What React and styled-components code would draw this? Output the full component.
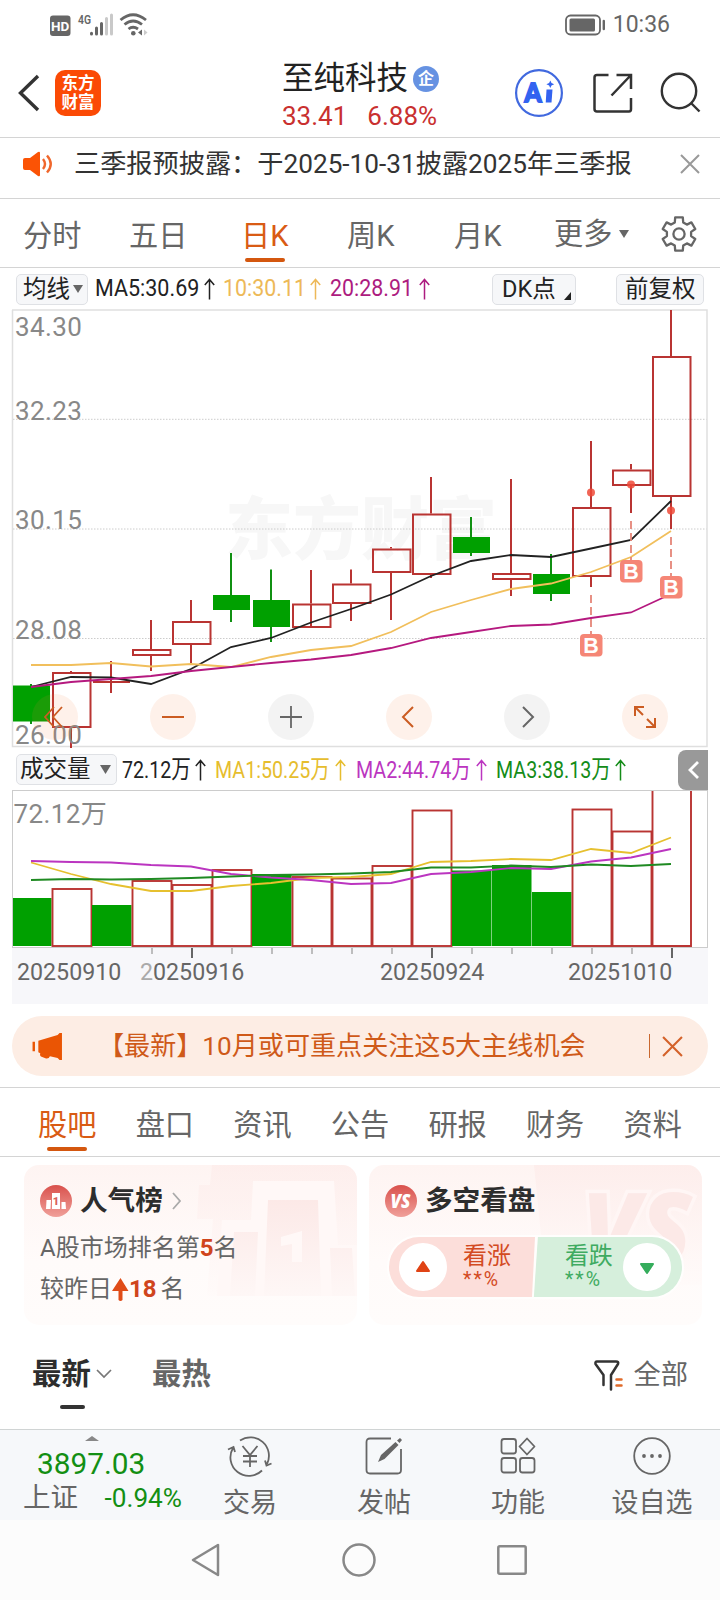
import React from 'react'
import styled, { createGlobalStyle } from 'styled-components'

const GlobalStyle = createGlobalStyle`
* { box-sizing: border-box; }
body {
    margin: 0;
    background: #fff;
    font-family: Roboto, "Noto Sans CJK SC", sans-serif;
    color: #333;
}
svg { display: block; flex: none; overflow: visible; }
`

const Page = styled.div`
width: 720px;
height: 1600px;
overflow: hidden;
display: flex;
flex-direction: column;
white-space: nowrap;
`

// -------Status bar-----------
const StatusBar = styled.div`
height: 48px;
padding: 1px 50px 0 50px;
display: flex;
align-items: center;
justify-content: space-between;
font-size: 23px;
line-height: 47px;
color: #666;
`
const StatusGroup = styled.div`
display: flex;
align-items: center;
gap: 8px;
`

// -------Header-----------
const Header = styled.header`
height: 90px;
border-bottom: 1px solid #d4d4d4;
padding: 0 20px 0 18px;
display: grid;
grid-template-columns: 264px 1fr 185px;
align-items: center;
`
const HeaderLeft = styled.div`
display: flex;
align-items: center;
gap: 16px;
`
const Logo = styled.div`
width: 46px;
height: 46px;
border-radius: 10px;
background: #fb4a05;
color: #fff;
font-size: 16.5px;
line-height: 19px;
font-weight: 700;
text-align: center;
padding-top: 4px;
`
const HeaderTitle = styled.div`
padding-top: 8px;
`
const StockName = styled.div`
display: flex;
align-items: center;
gap: 5px;
font-size: 31.5px;
line-height: 38px;
color: #222;
`
const Badge = styled.span`
width: 26px;
height: 26px;
border-radius: 50%;
background: #6692e2;
color: #fff;
font-size: 16px;
line-height: 26px;
font-weight: 700;
text-align: center;
`
const Quote = styled.div`
display: flex;
gap: 20px;
font-size: 26px;
line-height: 36px;
color: #c9302f;
`
const HeaderIcons = styled.div`
display: flex;
align-items: center;
justify-content: space-between;
`

// -------Notice-----------
const Notice = styled.div`
height: 61px;
padding: 0 20px 9px 22px;
border-bottom: 1px solid #d4d4d4;
display: flex;
align-items: center;
font-size: 26.2px;
line-height: 50px;
color: #333;
`
const NoticeText = styled.span`
flex: 1;
padding-left: 21px;
`

// -------Tabs-----------
const PeriodTabs = styled.nav`
height: 69px;
padding: 0 23px;
border-bottom: 1px solid #d4d4d4;
display: grid;
grid-template-columns: 106px 112px 106px 107px 100px 107px 36px;
justify-items: start;
`
const Tab = styled.div`
height: 66px;
display: flex;
flex-direction: column;
align-items: center;
font-size: 29.2px;
line-height: 74px;
color: ${({ $active }) => ($active ? '#d95b14' : '#666')};

&::after {
    content: "";
    width: 40px;
    height: 4px;
    flex: none;
    margin-top: -15px;
    border-radius: 2px;
    background: ${({ $active }) => ($active ? '#d4570f' : 'transparent')};
}
`
const MoreTab = styled.div`
display: flex;
align-items: center;
gap: 7px;
height: 70px;
font-size: 29.2px;
line-height: 74px;
color: #666;
`

// -------Indicator rows-----------
const IndicatorRow = styled.div`
height: ${({ $height }) => $height};
padding: 1px 12px 0 16px;
display: flex;
align-items: center;
`
const Chip = styled.div`
width: ${({ $width }) => $width};
height: 31px;
margin-right: ${({ $gap }) => $gap || '0'};
padding-left: ${({ $pad }) => $pad || '7px'};
border: 1px solid #dfe1e5;
border-radius: 5px;
background: #f6f7f9;
display: flex;
align-items: center;
gap: ${({ $inner }) => $inner || '5px'};
font-size: 23.5px;
line-height: 29px;
color: #222;
`
const Figure = styled.div`
width: ${({ $width }) => $width};
display: flex;
align-items: center;
color: ${({ $color }) => $color};
`
const FigureText = styled.span`
width: ${({ $width }) => $width};
font-size: ${({ $size }) => $size || '23px'};
line-height: 30px;

span {
    display: inline-block;
    transform: scaleX(${({ $scale }) => $scale});
    transform-origin: left;
}
`
const SideToggle = styled.div`
width: 30px;
height: 40px;
margin-left: auto;
border-radius: 8px 0 0 8px;
background: #999;
display: flex;
align-items: center;
justify-content: center;
`

// -------Charts-----------
const ChartArea = styled.div`
position: relative;
height: ${({ $height }) => $height};
`
const ChartTools = styled.div`
position: absolute;
left: 32px;
right: 52px;
bottom: 8px;
display: flex;
justify-content: space-between;
`
const ToolButton = styled.div`
width: 46px;
height: 46px;
border-radius: 50%;
background: ${({ $grey }) => ($grey ? 'rgba(170, 170, 170, .14)' : 'rgba(250, 130, 60, .11)')};
color: ${({ $grey }) => ($grey ? '#666' : '#cb5c22')};
display: flex;
align-items: center;
justify-content: center;
`

// -------Banner-----------
const Banner = styled.div`
height: 60px;
margin: 12px 12px 11px;
padding: 0 25px 0 20px;
border-radius: 30px;
background: #fdede4;
display: flex;
align-items: center;
font-size: 26.1px;
line-height: 60px;
color: #cf5a19;
`
const BannerText = styled.span`
flex: 1;
padding-left: 35px;
`
const Divider = styled.i`
width: 1.5px;
height: 24px;
margin-right: 12px;
background: #c9682f;
`

const SectionTabs = styled.nav`
height: 70px;
border-top: 1px solid #d4d4d4;
border-bottom: 1px solid #d4d4d4;
padding: 0 18.5px;
display: grid;
grid-template-columns: repeat(7, 1fr);
`

// -------Cards-----------
const Cards = styled.div`
height: 168px;
padding: 8px 18px 0 24px;
display: grid;
grid-template-columns: 333px 333px;
gap: 12px;
`
const Card = styled.section`
position: relative;
overflow: hidden;
height: 160px;
border-radius: 15px;
background: linear-gradient(#fef4f2, #fffbfa 60%, #fffcfb);
padding: 15px 0 0 16px;
`
const CardArt = styled.div`
position: absolute;
top: 0;
right: 0;
`
const CardTitle = styled.div`
position: relative;
display: flex;
align-items: center;
gap: 8px;
height: 42px;
font-size: 27.6px;
line-height: 44px;
font-weight: 700;
color: #2d2d2d;
`
const CardLine = styled.div`
position: relative;
height: 41px;
display: flex;
align-items: center;
font-size: 24px;
line-height: 41px;
padding-top: ${({ $drop }) => $drop || '11px'};
color: #666;

b {
    margin-right: ${({ $space }) => $space || '0'};
    color: #d0451d;
}
`
const Vote = styled.div`
position: relative;
width: 297px;
height: 64px;
margin: 13px 0 0 2px;
border: 2px solid #fffefd;
border-radius: 32px;
background: #fffefd;
display: flex;
overflow: hidden;
`
const VoteSide = styled.div`
width: ${({ $up }) => ($up ? '149px' : '150px')};
margin-left: ${({ $up }) => ($up ? '0' : '-4px')};
height: 60px;
padding: ${({ $up }) => ($up ? '0 0 0 10px' : '0 11px 0 32px')};
display: flex;
align-items: center;
justify-content: ${({ $up }) => ($up ? 'flex-start' : 'space-between')};
gap: ${({ $up }) => ($up ? '16px' : '0')};
color: ${({ $up }) => ($up ? '#d34a22' : '#3fab61')};
background: ${({ $up }) => ($up ? '#fcdeda' : '#d6efdc')};
clip-path: ${({ $up }) => ($up
        ? 'polygon(0 0, 146px 0, 143px 100%, 0 100%)'
        : 'polygon(5px 0, 100% 0, 100% 100%, 1px 100%)')};
`
const VoteCircle = styled.div`
width: 48px;
height: 48px;
border-radius: 50%;
background: #fff;
display: flex;
align-items: center;
justify-content: center;
`
const VoteText = styled.div`
padding-bottom: 3px;
font-size: 24px;
line-height: 28px;

small {
    display: block;
    font-size: 19.5px;
    line-height: 19px;
    letter-spacing: 2px;
}
`

// -------Post filter-----------
const PostTabs = styled.div`
height: 105px;
border-bottom: 1px solid #d0d4d4;
padding: 0 32px 4px 32px;
display: flex;
align-items: center;
`
const PostTab = styled.div`
height: 66px;
margin-right: ${({ $gap }) => $gap || '0'};
font-size: 29.4px;
line-height: 64px;
font-weight: 700;
color: ${({ $active }) => ($active ? '#2d2d2d' : '#666')};
display: flex;
flex-wrap: wrap;
align-content: flex-start;
align-items: center;
width: ${({ $width }) => $width};
gap: 0 6px;

&::after {
    content: "";
    width: 25px;
    height: 4px;
    margin: -1px 0 0 28px;
    border-radius: 2px;
    background: ${({ $active }) => ($active ? '#333' : 'transparent')};
}
`
const Filter = styled.div`
margin-left: auto;
display: flex;
align-items: center;
gap: 10px;
font-size: 27.3px;
line-height: 60px;
color: #666;
`

// -------Bottom bars-----------
const ActionBar = styled.footer`
height: 90px;
background: #f6f8fa;
display: flex;
`
const IndexQuote = styled.div`
width: 183px;
color: #138f13;
`
const IndexCaret = styled.div`
display: flex;
height: 12px;
padding: 6px 0 0 85px;
`
const IndexValue = styled.div`
padding-left: 37px;
height: 44px;
font-size: 29.8px;
line-height: 44px;
`
const IndexChange = styled.div`
display: flex;
justify-content: space-between;
padding: 1px 1px 0 23px;
font-size: 26.2px;
line-height: 22px;

span {
    font-size: 27.5px;
    color: #666;
}
`
const Action = styled.div`
width: 134px;
padding-top: 6px;
display: flex;
flex-direction: column;
align-items: center;
gap: 8px;
font-size: 27px;
line-height: 38px;
color: #666;
`
const SystemNav = styled.div`
height: 80px;
background: #fcfcfc;
padding: 0 193px 0 191px;
display: flex;
align-items: center;
justify-content: space-between;
`

// -------Data-----------
// [up, bodyTop, bodyBottom, high, low]
const candles = [
    [false, 685.5, 721.5, 684, 724],
    [true, 672, 728, 671, 748],
    [true, 681, 683, 661, 693],
    [true, 649, 656, 620, 671],
    [true, 621, 645, 600, 663],
    [false, 595, 610, 553, 622],
    [false, 600, 627, 569.5, 642],
    [true, 603.5, 628, 570, 604],
    [true, 583.5, 604, 569.5, 621],
    [true, 548.5, 573, 547, 620],
    [true, 513.5, 575, 477, 578],
    [false, 537, 553, 517, 556],
    [true, 573, 580, 479, 596],
    [false, 574, 594, 554, 601],
    [true, 507, 577, 441, 587],
    [true, 469.5, 486, 464, 513],
    [true, 356, 497, 310, 529],
]

const signals = [
    { i: 14, dot: 492.5, from: 595, box: 634 },
    { i: 15, dot: 484.5, from: 521, box: 560 },
    { i: 16, dot: 510.5, from: 537, box: 576 },
]

const averages = [
    { color: '#222', values: [687, 677, 677.5, 684, 669, 647, 638, 622.5, 609, 594.5, 576, 561, 555, 557, 548.5, 540, 501] },
    { color: '#f1bf5c', values: [665, 665, 663, 666.5, 664, 667, 657, 650, 646, 632, 612, 600, 589, 583.5, 572, 557, 531] },
    { color: '#b5197f', values: [687, 682, 679, 676, 671, 667, 663, 659.5, 655, 648, 638, 632, 626, 624.5, 618, 612.5, 594] },
]

// [up, top]
const volumes = [
    [false, 898], [true, 889], [false, 905], [true, 881], [true, 885], [true, 870],
    [false, 874], [true, 877], [true, 878.5], [true, 866], [true, 810.5], [false, 870.5],
    [false, 865], [false, 892], [true, 809.5], [true, 831.5], [true, 780],
]

const volumeAverages = [
    { color: '#e6c02f', values: [862.5, 874, 884, 891, 891, 886, 883, 878, 877, 874, 862, 861, 859, 860, 849, 853, 837.5] },
    { color: '#bb35c0', values: [861, 862, 862.5, 865, 866.5, 874, 877.5, 880, 884, 883, 874, 872, 868, 869, 861.5, 857.5, 849] },
    { color: '#1f8a22', values: [880, 879, 879.5, 879, 878, 876.5, 875, 874.5, 873.5, 872, 867.5, 867.5, 865.5, 867, 864.5, 866, 864] },
]

const priceLabels = [['34.30', 336], ['32.23', 420], ['30.15', 529], ['28.08', 638.5], ['26.00', 744]]
const dates = [['20250910', 17], ['20250916', 140], ['20250924', 380], ['20251010', 568]]
const sections = ['股吧', '盘口', '资讯', '公告', '研报', '财务', '资料']

const RED = '#b93432'
const GREEN = '#00a000'
const columnX = (i) => 31 + i * 40
const toPoints = (values) => values.map((y, i) => `${columnX(i)},${y}`).join(' ')

// -------Icons-----------
const UpArrow = () => (
    <svg width="11" height="22" viewBox="0 0 11 22" fill="none" stroke="currentColor" strokeWidth="1.5">
        <path d="M5.5 21.5V2M.8 7L5.5 1.5 10.2 7" />
    </svg>
)

const DownTriangle = ({ width = 10, height = 8 }) => (
    <svg width={width} height={height} viewBox="0 0 10 8" fill="#666">
        <path d="M0 0h10L5 8z" />
    </svg>
)

const Cross = ({ size, color, weight = 1.8 }) => (
    <svg width={size} height={size} viewBox="0 0 20 20" stroke={color} strokeWidth={weight}>
        <path d="M1 1l18 18M19 1L1 19" />
    </svg>
)

const Gear = () => {
    const spots = []
    for (let i = 0; i < 6; i++) {
        const a = i * 60 - 90;
        [[-20, 12.3], [-13, 17], [13, 17], [20, 12.3]].forEach(([offset, r]) => {
            const t = ((a + offset) * Math.PI) / 180
            spots.push(`${(18 + r * Math.cos(t)).toFixed(1)},${(18 + r * Math.sin(t)).toFixed(1)}`)
        })
    }
    return (
        <svg width="36" height="36" viewBox="0 0 36 36" fill="none" stroke="#666" strokeWidth="2.3" strokeLinejoin="round">
            <polygon points={spots.join(' ')} />
            <circle cx="18" cy="18" r="5.6" />
        </svg>
    )
}

const SignalIcons = () => (
    <svg width="98" height="24" viewBox="50 12.5 98 24">
        <rect x="50" y="15" width="20.5" height="20.5" rx="3" fill="#666" />
        <text x="60.2" y="30.5" fontSize="13.5" fontWeight="700" fill="#fff" textAnchor="middle">HD</text>
        <text x="78" y="23" fontSize="13.5" fontWeight="600" fill="#666" textLength="13" lengthAdjust="spacingAndGlyphs">4G</text>
        <g strokeWidth="3" strokeLinecap="round">
            <path d="M91.5 33.5v-.8M96.5 33.5v-6M101.5 33.5V23" stroke="#666" />
            <path d="M106.5 33.5V18M111.5 33.5V14.5" stroke="#c9c9c9" />
        </g>
        <g fill="none" stroke="#666" strokeWidth="2.8">
            <path d="M120.5 19.5q12.5-10.5 25.5 0M124.5 24q8.5-7 17.5 0M128.5 28.5q4.5-3.5 9.5 0" />
        </g>
        <circle cx="133.3" cy="32.8" r="2.3" fill="#666" />
        <path d="M142 29v6l-4-3z" fill="#666" />
        <path d="M144 29v6l3.5-3z" fill="#ccc" />
    </svg>
)

const Battery = () => (
    <svg width="40" height="22" viewBox="0 0 40 22" fill="none">
        <rect x="1" y="1.5" width="34" height="19" rx="4.5" stroke="#666" strokeWidth="1.8" />
        <rect x="4.5" y="4.5" width="25.5" height="13" rx="1.5" fill="#666" />
        <path d="M38.8 7v8" stroke="#666" strokeWidth="2.4" strokeLinecap="round" />
    </svg>
)

const AiIcon = () => (
    <svg width="48" height="48" viewBox="0 0 48 48">
        <circle cx="24" cy="24" r="22.9" fill="none" stroke="#4169df" strokeWidth="2.2" />
        <text x="9.5" y="33" fontFamily="Lato" fontSize="27" fontWeight="900" fill="#3363f0" stroke="#3363f0" strokeWidth="1.8" textLength="17" lengthAdjust="spacingAndGlyphs">A</text>
        <path d="M31.5 20.500h6l-1 13h-5.800z" fill="#3363f0" />
        <path d="M35.3 11.5l1.200 2.600 2.700 1.200-2.700 1.200-1.200 2.600-1.200-2.600-2.700-1.200 2.700-1.200z" fill="#3363f0" />
    </svg>
)

// -------JSX Elements-----------
const PriceChart = () => (
    <svg width="720" height="439" viewBox="0 309 720 439">
        <text x="225" y="554" fontFamily="Noto Sans CJK SC" fontSize="68" fontWeight="900" fill="#f7f7f7">东方财富</text>
        {[419.3, 529, 638.5].map((y) => (
            <line key={y} x1="13" x2="707" y1={y} y2={y} stroke="#ccc" strokeDasharray="1.5 1.5" />
        ))}
        <path d="M12 310H707V746.5H12.5V310" fill="none" stroke="#dfdfdf" strokeWidth="1.5" />
        {candles.map(([up, top, bottom, high, low], i) => {
            const x = columnX(i)
            const color = up ? RED : '#109012'
            return (
                <g key={i}>
                    <path d={up ? `M${x} ${high}V${top}M${x} ${bottom}V${low}` : `M${x} ${high}V${low}`} stroke={color} strokeWidth="2" />
                    {up
                        ? (bottom - top < 3
                            ? <rect x={x - 18} y={top} width="37" height="2" fill={RED} />
                            : <rect x={x - 18} y={top + 1} width="37.5" height={bottom - top - 2} fill="none" stroke={RED} strokeWidth="2" />)
                        : <rect x={x - 18} y={top} width="37" height={bottom - top} fill={GREEN} />}
                </g>
            )
        })}
        {averages.map(({ color, values }) => (
            <polyline key={color} points={toPoints(values)} fill="none" stroke={color} strokeWidth="1.8" />
        ))}
        {signals.map(({ i, dot, from, box }) => (
            <g key={i}>
                <circle cx={columnX(i)} cy={dot} r="4" fill="#ee4a38" fillOpacity=".85" />
                <line x1={columnX(i)} x2={columnX(i)} y1={from} y2={box} stroke="#e58578" strokeWidth="1.8" strokeDasharray="8 4" />
                <rect x={columnX(i) - 11} y={box} width="22.5" height="22.5" rx="4" fill="#f58676" />
                <text x={columnX(i)} y={box + 18.5} fontFamily="Liberation Sans" fontSize="21.5" fontWeight="700" fill="#fff" textAnchor="middle">B</text>
            </g>
        ))}
        {priceLabels.map(([label, y]) => (
            <text key={label} x="15" y={y} fontSize="26" letterSpacing=".4" fill="#888">{label}</text>
        ))}
    </svg>
)

const VolumeChart = () => (
    <svg width="720" height="214" viewBox="0 790 720 214">
        <rect x="12" y="948" width="696" height="56" fill="#f7f7fa" />
        <rect x="12.5" y="790.5" width="695" height="157" fill="#fff" stroke="#ccc" />
        <text x="13.5" y="822.5" fontSize="26" letterSpacing=".4" fill="#888">72.12万</text>
        {volumes.map(([up, top], i) => {
            const x = columnX(i)
            if (!up) return <rect key={i} x={i === 0 ? 13 : x - 19} y={top} width={i === 0 ? 38.5 : 39.5} height={946 - top} fill={GREEN} />
            if (top < 791) return <path key={i} d={`M${x - 18.5} 791V946H${x + 20}V791`} fill="none" stroke={RED} strokeWidth="1.9" />
            return <rect key={i} x={x - 18.5} y={top} width="39" height={946 - top} fill="none" stroke={RED} strokeWidth="1.9" />
        })}
        {volumeAverages.map(({ color, values }) => (
            <polyline key={color} points={toPoints(values)} fill="none" stroke={color} strokeWidth="1.8" />
        ))}
        {volumes.map((_, i) => {
            const major = i === 4 || i === 10 || i === 16
            return i > 2 && (
                <line key={i} x1={columnX(i) + 1} x2={columnX(i) + 1} y1="948" y2={major ? 958 : 954} stroke={major ? '#666' : '#aaa'} strokeWidth={major ? 2 : 1.5} />
            )
        })}
        {dates.map(([label, x], i) => (
            <text key={label} x={x} y="980" fontSize="23.2" fill="#666">
                {i === 1 ? <><tspan fill="#aaa">2</tspan>{label.slice(1)}</> : label}
            </text>
        ))}
    </svg>
)

const App = () => {
    return (
        <Page>
            <GlobalStyle />

            {/* Status bar */}
            <StatusBar>
                <SignalIcons />
                <StatusGroup><Battery />10:36</StatusGroup>
            </StatusBar>

            {/* Header */}
            <Header>
                <HeaderLeft>
                    <svg width="21" height="36" viewBox="0 0 21 36" fill="none" stroke="#333" strokeWidth="3.4">
                        <path d="M20 1L2.5 18 20 35" />
                    </svg>
                    <Logo>东方<br />财富</Logo>
                </HeaderLeft>
                <HeaderTitle>
                    <StockName>至纯科技<Badge>企</Badge></StockName>
                    <Quote><span>33.41</span><span>6.88%</span></Quote>
                </HeaderTitle>
                <HeaderIcons>
                    <AiIcon />
                    <svg width="40" height="40" viewBox="0 0 40 40" fill="none" stroke="#333" strokeWidth="2.5">
                        <path d="M16.5 2H5Q2.5 2 2.5 4.500V36Q2.5 38.5 5 38.5H37Q39 38.5 39 36V25M24.5 2H39V16M19.5 22.5L39 2" />
                    </svg>
                    <svg width="40" height="40" viewBox="0 0 40 40" fill="none" stroke="#333" strokeWidth="2.4">
                        <circle cx="19" cy="18" r="17.2" />
                        <path d="M31 30l8.5 8.5" />
                    </svg>
                </HeaderIcons>
            </Header>

            {/* Notice */}
            <Notice>
                <svg width="31" height="26" viewBox="0 0 31 26">
                    <path d="M1 9q0-2 2-2h5l8-6q2-1 2 1v22q0 2-2 1l-8-6H3q-2 0-2-2z" fill="#fb5305" />
                    <path d="M21 8q4 5 0 10M25 4.5q7.5 8.5 0 17" fill="none" stroke="#f0672c" strokeWidth="2.4" />
                </svg>
                <NoticeText>三季报预披露：于2025-10-31披露2025年三季报</NoticeText>
                <Cross size={20} color="#999" weight={2} />
            </Notice>

            {/* Period tabs */}
            <PeriodTabs>
                <Tab>分时</Tab>
                <Tab>五日</Tab>
                <Tab $active>日K</Tab>
                <Tab>周K</Tab>
                <Tab>月K</Tab>
                <MoreTab>更多<DownTriangle /></MoreTab>
                <MoreTab><Gear /></MoreTab>
            </PeriodTabs>

            {/* Moving averages */}
            <IndicatorRow $height="41px">
                <Chip $width="72px" $gap="7px" $pad="6px" $inner="3px">均线<DownTriangle /></Chip>
                <Figure $width="128px" $color="#222">
                    <FigureText $width="109px" $scale=".935"><span>MA5:30.69</span></FigureText><UpArrow />
                </Figure>
                <Figure $width="107px" $color="#edb958">
                    <FigureText $width="87px" $scale=".93"><span>10:30.11</span></FigureText><UpArrow />
                </Figure>
                <Figure $width="162px" $color="#ad1c80">
                    <FigureText $width="89px" $scale=".93"><span>20:28.91</span></FigureText><UpArrow />
                </Figure>
                <Chip $width="84px" $gap="40px" $pad="9px" $inner="8px">
                    DK点
                    <svg width="7" height="22" viewBox="0 0 7 22"><path d="M7 14v8H0z" fill="#222" /></svg>
                </Chip>
                <Chip $width="88px" $pad="8px">前复权</Chip>
            </IndicatorRow>

            {/* Price chart */}
            <ChartArea $height="439px">
                <PriceChart />
                <ChartTools>
                    <ToolButton>
                        <svg width="19" height="20" viewBox="0 0 19 20" fill="none" stroke="currentColor" strokeWidth="1.8"><path d="M8 0L-1 10l9 10M16 0L7 10l9 10" /></svg>
                    </ToolButton>
                    <ToolButton>
                        <svg width="22" height="2" viewBox="0 0 22 2"><path d="M0 1h22" stroke="currentColor" strokeWidth="2" /></svg>
                    </ToolButton>
                    <ToolButton $grey>
                        <svg width="22" height="22" viewBox="0 0 22 22"><path d="M0 11h22M11 0v22" stroke="currentColor" strokeWidth="1.8" /></svg>
                    </ToolButton>
                    <ToolButton>
                        <svg width="14" height="20" viewBox="0 0 14 20" fill="none" stroke="currentColor" strokeWidth="2"><path d="M11 0L1 10l10 10" /></svg>
                    </ToolButton>
                    <ToolButton $grey>
                        <svg width="12" height="20" viewBox="0 0 12 20" fill="none" stroke="currentColor" strokeWidth="2"><path d="M2 0l10 10L2 20" /></svg>
                    </ToolButton>
                    <ToolButton>
                        <svg width="22" height="22" viewBox="0 0 22 22" fill="none" stroke="currentColor" strokeWidth="2"><path d="M1 10V1h9M1 1l8 8M21 12v9h-9M21 21l-8-8" /></svg>
                    </ToolButton>
                </ChartTools>
            </ChartArea>

            {/* Volume figures */}
            <IndicatorRow $height="42px">
                <Chip $width="101px" $gap="5px" $pad="3px" $inner="9px">成交量<DownTriangle width={11} height={9} /></Chip>
                <Figure $width="93px" $color="#222">
                    <FigureText $width="73px" $size="24.5px" $scale=".8"><span>72.12万</span></FigureText><UpArrow />
                </Figure>
                <Figure $width="141px" $color="#e6bd2e">
                    <FigureText $width="120px" $size="24.5px" $scale=".802"><span>MA1:50.25万</span></FigureText><UpArrow />
                </Figure>
                <Figure $width="140px" $color="#bb35c0">
                    <FigureText $width="120px" $size="24.5px" $scale=".802"><span>MA2:44.74万</span></FigureText><UpArrow />
                </Figure>
                <Figure $width="140px" $color="#148c18">
                    <FigureText $width="119px" $size="24.5px" $scale=".802"><span>MA3:38.13万</span></FigureText><UpArrow />
                </Figure>
                <SideToggle>
                    <svg width="11" height="18" viewBox="0 0 11 18" fill="none" stroke="#fff" strokeWidth="2.8"><path d="M10 1L2 9l8 8" /></svg>
                </SideToggle>
            </IndicatorRow>

            <ChartArea $height="214px">
                <VolumeChart />
            </ChartArea>

            {/* Banner */}
            <Banner>
                <svg width="31" height="27" viewBox="0 0 31 28" fill="#ea5504">
                    <path d="M0 9h2.5v10H0zM6 8l20-6 2-2h2.5v28H28l-2-2-8-2q-1 3-4 2.5L10 25q-3-1-2-4l-2-1z" />
                </svg>
                <BannerText>【最新】10月或可重点关注这5大主线机会</BannerText>
                <Divider />
                <Cross size={21} color="#d4622a" weight={2} />
            </Banner>

            {/* Section tabs */}
            <SectionTabs>
                {sections.map((name, i) => (
                    <Tab key={name} $active={i === 0}>{name}</Tab>
                ))}
            </SectionTabs>

            {/* Cards */}
            <Cards>
                <Card>
                    <CardArt>
                        <svg width="170" height="160" viewBox="0 0 170 160" fill="none">
                            <defs>
                                <linearGradient id="fade" x1="0" y1="0" x2="0" y2="1">
                                    <stop offset="0" stopColor="#fce9e7" />
                                    <stop offset="1" stopColor="#fef7f6" />
                                </linearGradient>
                                <linearGradient id="haze" x1="0" y1="0" x2="0" y2="1">
                                    <stop offset="0" stopColor="#fdecea" />
                                    <stop offset="1" stopColor="#fffaf9" />
                                </linearGradient>
                            </defs>
                            <path d="M25 0H170V131H20L26 54H10L12 20H23z" fill="url(#haze)" opacity=".7" />
                            <path d="M30 131L35 55H64L66 16H147L151 80H170V131z" fill="#fff8f7" />
                            <path d="M47 67h24l-3 64H43zM81 35h50l3 96H77zM143 83h22l3 48h-23z" fill="url(#fade)" />
                            <path d="M94 72l21-6v31h-10V79l-11 2z" fill="#fff8f7" />
                        </svg>
                    </CardArt>
                    <CardTitle>
                        <svg width="32" height="32" viewBox="0 0 32 32">
                            <defs>
                                <linearGradient id="round" x1="0" y1="0" x2="0" y2="1">
                                    <stop offset="0" stopColor="#d9514c" />
                                    <stop offset="1" stopColor="#f0a09a" />
                                </linearGradient>
                            </defs>
                            <circle cx="16" cy="16" r="16" fill="url(#round)" />
                            <path d="M6.500 15h4.500l-.5 9H6zM12 8h8v16h-8zM21.500 17h4l.5 7h-4.500z" fill="#fff" />
                            <text x="16" y="20" fontSize="11" fontWeight="900" fill="#d9605a" textAnchor="middle">1</text>
                        </svg>
                        人气榜
                        <svg width="10" height="16" viewBox="-1 0 10 16" fill="none" stroke="#aaa" strokeWidth="1.8"><path d="M1 0l7 8-7 8" /></svg>
                    </CardTitle>
                    <CardLine>A股市场排名第<b>5</b>名</CardLine>
                    <CardLine $drop="12px" $space="4px">
                        较昨日
                        <svg width="17" height="24" viewBox="0 0 17 24" fill="#e04c18"><path d="M8.5 0l8 13h-6v9q-2 2-4 0v-9H0z" /></svg>
                        <b>18</b>名
                    </CardLine>
                </Card>

                <Card>
                    <CardArt>
                        <svg width="170" height="160" viewBox="0 0 170 160">
                            <path d="M2 0H170V120H14z" fill="url(#haze)" opacity=".8" />
                            <text x="50" y="98" fontFamily="Open Sans" fontWeight="800" fontStyle="italic" fontSize="98" fill="#fce9e7" stroke="#fff6f5" strokeWidth="7" paintOrder="stroke" textLength="110" lengthAdjust="spacingAndGlyphs">VS</text>
                        </svg>
                    </CardArt>
                    <CardTitle>
                        <svg width="32" height="32" viewBox="0 0 32 32">
                            <circle cx="16" cy="16" r="16" fill="url(#round)" />
                            <text x="15.5" y="23" fontFamily="Open Sans" fontSize="19" fontWeight="800" fontStyle="italic" fill="#fff" textAnchor="middle" textLength="20" lengthAdjust="spacingAndGlyphs">VS</text>
                        </svg>
                        多空看盘
                    </CardTitle>
                    <Vote>
                        <VoteSide $up>
                            <VoteCircle>
                                <svg width="16" height="14" viewBox="0 0 16 14" fill="#e04315" stroke="#e04315" strokeWidth="2" strokeLinejoin="round"><path d="M8 2l6 9H2z" /></svg>
                            </VoteCircle>
                            <VoteText>看涨<small>**%</small></VoteText>
                        </VoteSide>
                        <VoteSide>
                            <VoteText>看跌<small>**%</small></VoteText>
                            <VoteCircle>
                                <svg width="16" height="14" viewBox="0 0 16 14" fill="#35ad5c" stroke="#35ad5c" strokeWidth="2" strokeLinejoin="round"><path d="M8 13l6-9H2z" /></svg>
                            </VoteCircle>
                        </VoteSide>
                    </Vote>
                </Card>
            </Cards>

            {/* Post filter */}
            <PostTabs>
                <PostTab $active $width="86px" $gap="34px">
                    最新
                    <svg width="14" height="9" viewBox="0 0 14 9" fill="none" stroke="#777" strokeWidth="1.7"><path d="M0 0l7 7 7-7" /></svg>
                </PostTab>
                <PostTab $width="62px">最热</PostTab>
                <Filter>
                    <svg width="29" height="31" viewBox="0 0 29 31" fill="none" strokeWidth="2.5" strokeLinecap="round" strokeLinejoin="round">
                        <path d="M9.5 25V15L1.5 4Q1 1.5 3 1.5H22Q25 1.5 24 4L17 15V29.5" stroke="#333" />
                        <path d="M22.5 19.5h5M22.5 25.5h5" stroke="#e06a2a" />
                    </svg>
                    全部
                </Filter>
            </PostTabs>

            {/* Action bar */}
            <ActionBar>
                <IndexQuote>
                    <IndexCaret><svg width="14" height="5" viewBox="0 0 14 5" fill="#888"><path d="M0 5l7-5 7 5z" /></svg></IndexCaret>
                    <IndexValue>3897.03</IndexValue>
                    <IndexChange><span>上证</span>-0.94%</IndexChange>
                </IndexQuote>
                <Action>
                    <svg width="44" height="40" viewBox="0 0 44 40" fill="none" stroke="#666" strokeWidth="1.8">
                        <path d="M12 4.5A18.5 18.5 0 0 1 39 28M34 34.5A18.5 18.5 0 0 1 5 12M0 13.5L5.5 11 7 16M37 24.5l1.5 5 5-2M14.5 10l7.5 9 7.5-9M22 19v12M15 20h14M15 25.5h14" />
                    </svg>
                    交易
                </Action>
                <Action>
                    <svg width="38" height="40" viewBox="0 0 38 40" fill="none" stroke="#666" strokeWidth="1.8">
                        <path d="M26 2.5H5Q1.5 2.5 1.5 6V34Q1.5 37.5 5 37.5H32.5Q36 37.5 36 34V13" />
                        <path d="M13 26l3-7L30.5 6l3 3-14 14z" fill="#666" stroke="none" />
                        <path d="M32 4.5l3-2.5 2 2-2.5 3z" fill="#666" stroke="none" />
                    </svg>
                    发帖
                </Action>
                <Action>
                    <svg width="36" height="40" viewBox="0 0 36 40" fill="none" stroke="#666" strokeWidth="1.8">
                        <rect x="1.5" y="3" width="14.5" height="14.5" rx="2.5" />
                        <rect x="1.5" y="22" width="14.5" height="14.5" rx="2.5" />
                        <rect x="20" y="22" width="14.5" height="14.5" rx="2.5" />
                        <path d="M27 2.5l7.5 8-7.5 8-7.5-8z" strokeLinejoin="round" />
                    </svg>
                    功能
                </Action>
                <Action>
                    <svg width="38" height="40" viewBox="0 0 38 40" fill="#666">
                        <circle cx="19" cy="20" r="17.8" fill="none" stroke="#666" strokeWidth="1.8" />
                        <circle cx="11" cy="20" r="1.9" />
                        <circle cx="19" cy="20" r="1.9" />
                        <circle cx="27" cy="20" r="1.9" />
                    </svg>
                    设自选
                </Action>
            </ActionBar>

            {/* System navigation */}
            <SystemNav>
                <svg width="29" height="34" viewBox="0 0 29 34" fill="none" stroke="#888" strokeWidth="2.5" strokeLinejoin="round"><path d="M27 2v30L2 17z" /></svg>
                <svg width="34" height="34" viewBox="0 0 34 34" fill="none" stroke="#888" strokeWidth="2.5"><circle cx="17" cy="17" r="15.5" /></svg>
                <svg width="30" height="30" viewBox="0 0 30 30" fill="none" stroke="#888" strokeWidth="2.5"><rect x="1.3" y="1.3" width="27.4" height="27.4" rx="1.5" /></svg>
            </SystemNav>
        </Page>
    )
}

export default App
